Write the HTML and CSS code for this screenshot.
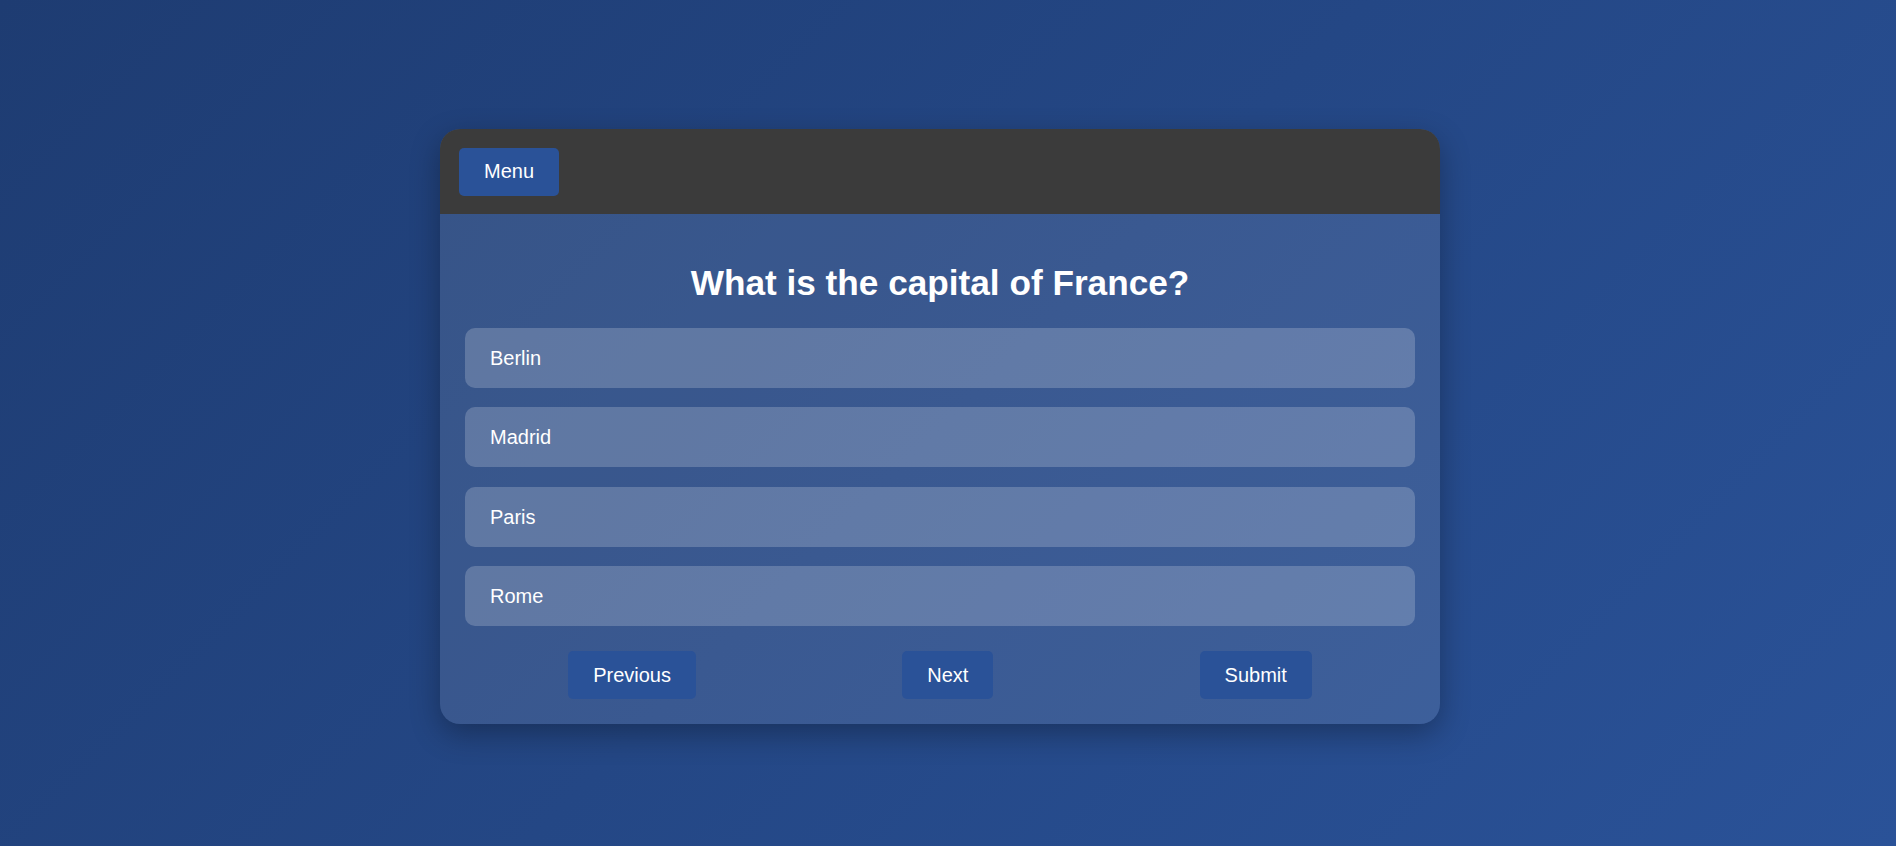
FILE: index.html
```html
<!DOCTYPE html>
<html lang="en">
<head>
<meta charset="utf-8">
<title>Quiz</title>
<link rel="stylesheet" href="styles.css">
</head>
<body>
  <div class="quiz-card">
    <header class="quiz-header">
      <button class="btn">Menu</button>
    </header>
    <main class="quiz-body">
      <h2 class="question">What is the capital of France?</h2>
      <div class="options">
        <div class="option">Berlin</div>
        <div class="option">Madrid</div>
        <div class="option">Paris</div>
        <div class="option">Rome</div>
      </div>
      <div class="quiz-footer">
        <button class="btn">Previous</button>
        <button class="btn">Next</button>
        <button class="btn">Submit</button>
      </div>
    </main>
  </div>
</body>
</html>
```
FILE: styles.css
```css
html, body {
  margin: 0;
  height: 100%;
}
body {
  box-sizing: border-box;
  min-height: 100vh;
  padding: 129px 16px 0 0;
  display: flex;
  justify-content: center;
  align-items: flex-start;
  background: linear-gradient(135deg, #1e3c72 0%, #2a5298 100%);
  font-family: "Liberation Sans", Arial, sans-serif;
  color: #fff;
}
.quiz-card {
  width: 1000px;
  border-radius: 20px;
  overflow: hidden;
  background: rgba(255, 255, 255, 0.1);
  box-shadow: 0 10px 30px rgba(0, 0, 0, 0.3);
}
.quiz-header {
  background: #3b3b3b;
  padding: 19px 19px 18px;
  display: flex;
}
.btn {
  font-family: "Liberation Sans", Arial, sans-serif;
  font-size: 20px;
  line-height: 24px;
  color: #fff;
  background: #2a5298;
  border: none;
  border-radius: 5px;
  padding: 12px 25px;
  cursor: pointer;
}
.quiz-header .btn {
  line-height: 23px;
  padding: 12px 25px 13px;
}
.quiz-body {
  padding: 25px;
  display: flex;
  flex-direction: column;
}
.question {
  margin: 24px 0 25px;
  text-align: center;
  font-size: 35.2px;
  font-weight: bold;
}
.options {
  display: flex;
  flex-direction: column;
  gap: 19.33px;
}
.option {
  background: rgba(255, 255, 255, 0.2);
  border-radius: 10px;
  padding: 18px 25px;
  font-size: 20px;
  line-height: 24px;
}
.quiz-footer {
  margin-top: 25px;
  display: flex;
  justify-content: space-around;
}
```
